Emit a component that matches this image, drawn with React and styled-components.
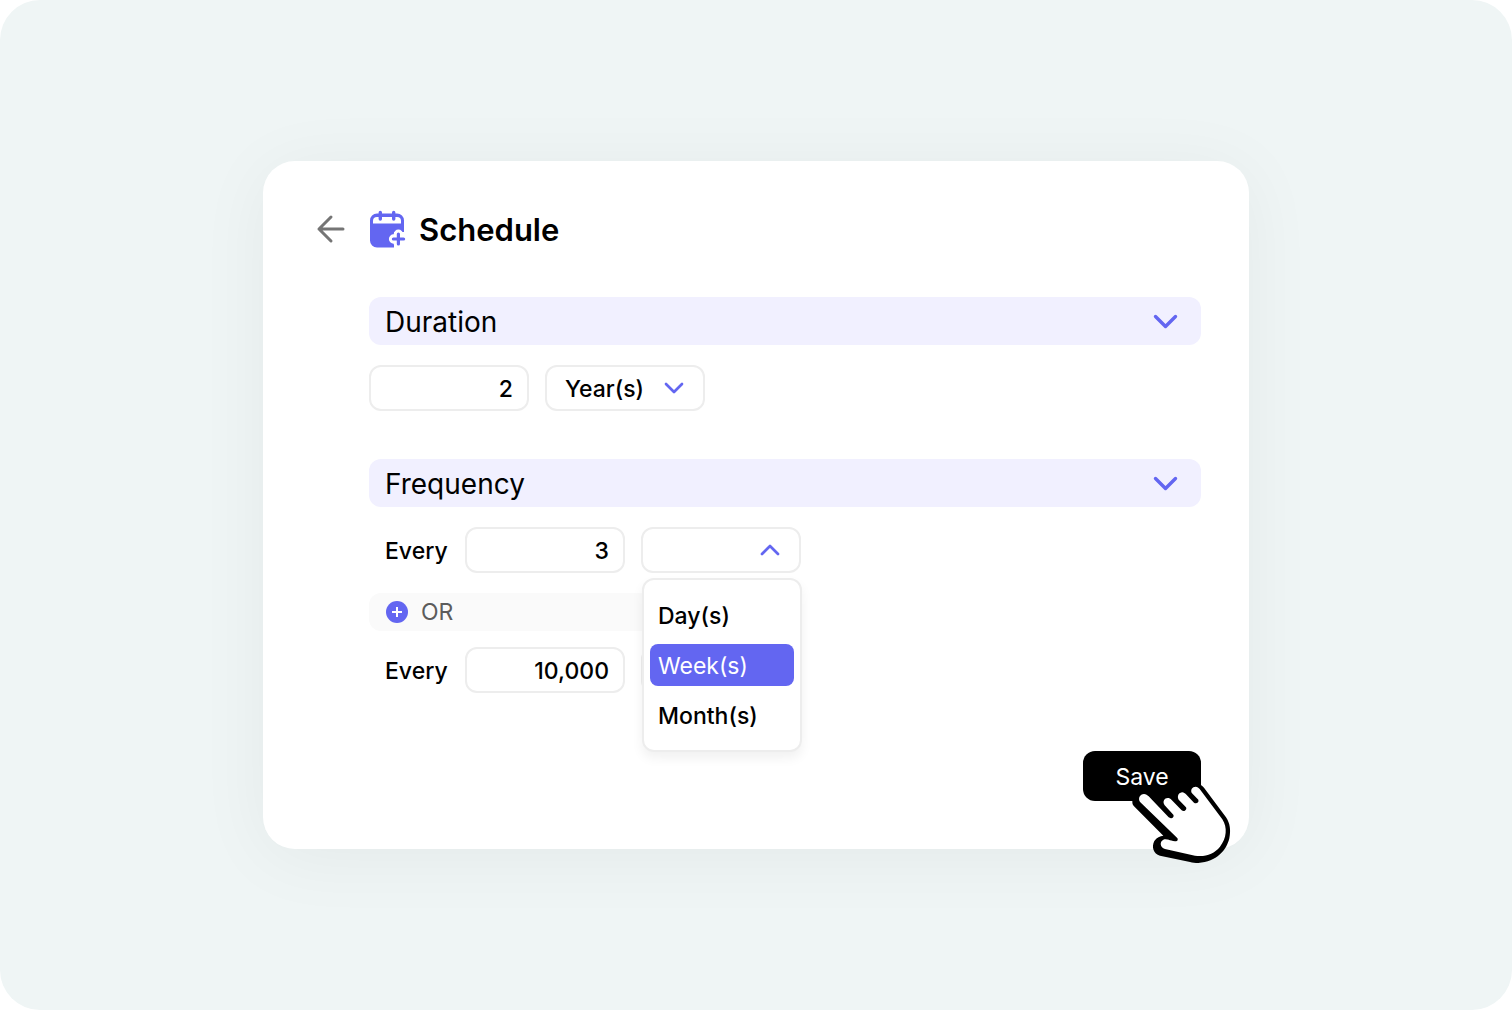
import React, { useState } from 'react';
import styled, { createGlobalStyle } from 'styled-components';

const color = {
  accent: '#6366f1',
  accentBg: '#f1f0ff',
  border: '#ededed',
  muted: '#fafafa',
  page: '#eff5f5',
};

const GlobalStyle = createGlobalStyle`
  *, *::before, *::after {
    box-sizing: border-box;
  }

  body {
    margin: 0;
    background-color: #fff;
    color: #000;
    font-family: Inter, 'Liberation Sans', sans-serif;
  }

  button, input, select {
    font: inherit;
    color: inherit;
  }
`;

const Page = styled.main`
  display: flex;
  align-items: center;
  justify-content: center;
  min-height: 100vh;
  padding: 48px;
  border-radius: 40px;
  background-color: ${color.page};
`;

const Card = styled.form`
  display: grid;
  grid-template-columns: 40px 1fr;
  column-gap: 18px;
  row-gap: 48px;
  width: 100%;
  max-width: 986px;
  padding: 48px;
  border-radius: 32px;
  background-color: #fff;
  box-shadow: 0 8px 72px rgba(0, 0, 0, 0.05);
`;

const BackButton = styled.button`
  display: flex;
  height: 40px;
  padding: 0;
  border: 0;
  background: none;
  color: #757575;
  cursor: pointer;
`;

const Header = styled.header`
  display: flex;
  align-items: center;
  gap: 12px;
`;

const Title = styled.h1`
  margin: 0;
  padding-top: 2px;
  font-size: 31px;
  font-weight: 600;
  line-height: 38px;
`;

const Content = styled.div`
  grid-column: 2;
  display: flex;
  flex-direction: column;
  gap: 48px;
`;

const Section = styled.section`
  display: flex;
  flex-direction: column;
  gap: 20px;
`;

const SectionToggle = styled.button`
  display: flex;
  align-items: center;
  justify-content: space-between;
  height: 48px;
  padding: 2px 23px 0 16px;
  border: 0;
  border-radius: 12px;
  background-color: ${color.accentBg};
  font-size: 28px;
  cursor: pointer;

  svg {
    margin-bottom: 2px;
    color: ${color.accent};
  }
`;

const Rules = styled.div`
  display: flex;
  flex-direction: column;
  gap: 16px;
`;

const Row = styled.div`
  display: flex;
  align-items: center;
  gap: 16px;
`;

const RowLabel = styled.label`
  width: 80px;
  padding-top: 2px;
  padding-left: 16px;
  font-size: 23px;
  font-weight: 500;
`;

const NumberInput = styled.input`
  width: 160px;
  height: 46px;
  padding: 2px 14px 0;
  border: 2px solid ${color.border};
  border-radius: 12px;
  background-color: #fff;
  font-size: 23px;
  font-weight: 500;
  text-align: right;
`;

const SelectBox = styled.div`
  position: relative;
  width: 160px;
  height: 46px;
`;

const UnitSelect = styled.select`
  width: 100%;
  height: 100%;
  padding: 2px 18px 0;
  border: 2px solid ${color.border};
  border-radius: 12px;
  background-color: #fff;
  font-size: 23px;
  font-weight: 500;
  appearance: none;
`;

const SelectIcon = styled.span`
  position: absolute;
  top: 17px;
  right: 21px;
  display: flex;
  color: ${color.accent};
  pointer-events: none;
`;

const Menu = styled.div`
  position: absolute;
  z-index: 1;
  top: 51px;
  left: 1px;
  display: flex;
  flex-direction: column;
  gap: 8px;
  width: 160px;
  padding: 14px 6px;
  border: 2px solid ${color.border};
  border-radius: 12px;
  background-color: #fff;
  box-shadow: 0 6px 12px rgba(0, 0, 0, 0.06);
`;

const MenuItem = styled.button`
  height: 42px;
  padding: 2px 8px 0;
  border: 0;
  border-radius: 8px;
  background-color: ${({ $active }) => ($active ? color.accent : 'transparent')};
  color: ${({ $active }) => ($active ? '#fff' : '#000')};
  font-size: 23px;
  font-weight: ${({ $active }) => ($active ? 400 : 500)};
  text-align: left;
  cursor: pointer;
`;

const OrBar = styled.button`
  display: flex;
  align-items: center;
  gap: 12px;
  width: 100%;
  max-width: 424px;
  height: 38px;
  margin-top: 4px;
  padding: 0 16px;
  border: 0;
  border-radius: 12px;
  background-color: ${color.muted};
  color: #5c5c5c;
  font-size: 23px;
  cursor: pointer;
`;

const Footer = styled.footer`
  grid-column: 2;
  display: flex;
  justify-content: flex-end;
  padding-top: 10px;
`;

const SaveBox = styled.div`
  position: relative;
`;

const SaveButton = styled.button`
  width: 118px;
  height: 50px;
  padding: 2px 0 0;
  border: 0;
  border-radius: 12px;
  background-color: #000;
  color: #fff;
  font-size: 23px;
  cursor: pointer;
`;

const Pointer = styled.svg`
  position: absolute;
  top: 31px;
  left: 47px;
  pointer-events: none;
`;

function ArrowIcon() {
  return (
    <svg width="40" height="40" viewBox="0 0 40 40" fill="none" stroke="currentColor" strokeWidth="3" strokeLinecap="round" strokeLinejoin="round">
      <path d="M32 20H8M20 8L8 20l12 12" />
    </svg>
  );
}

function CalendarIcon() {
  return (
    <svg width="38" height="38" viewBox="0 0 38 38" fill="none" stroke={color.accent} strokeLinecap="round">
      <path d="M8 3.500H28a7 7 0 0 1 7 7V22H25V37.500H8a7 7 0 0 1-7-7V10.500a7 7 0 0 1 7-7Z" fill={color.accent} stroke="none" />
      <path d="M4 13.500V11a4 4 0 0 1 4-4H28a4 4 0 0 1 4 4V13.500Z" fill="#fff" stroke="none" />
      <path d="M11.300 2.500V9M24.700 2.500V9" strokeWidth="3.400" />
      <path d="M29.400 24.200V33.800M24.600 29H34.200" stroke="#fff" strokeWidth="9.400" />
      <path d="M29.400 24V34M24.400 29H34.600" strokeWidth="3.200" />
    </svg>
  );
}

function Chevron({ width = 20, up = false }) {
  return (
    <svg width={width} height={width * 0.6} viewBox="0 0 20 12" fill="none" stroke="currentColor" strokeWidth="2.700" strokeLinecap="round" strokeLinejoin="round">
      <path d={up ? 'M2 10l8-8 8 8' : 'M2 2l8 8 8-8'} />
    </svg>
  );
}

function PlusIcon() {
  return (
    <svg width="24" height="24" viewBox="0 0 24 24">
      <circle cx="12" cy="12" r="11" fill={color.accent} />
      <path d="M12 7v10M7 12h10" stroke="#fff" strokeWidth="2" />
    </svg>
  );
}

function HandPointer() {
  return (
    <Pointer width="102" height="82" viewBox="210 126 306 246" aria-hidden="true">
      <path d="M217 186V178L240 155 300 170 350 150 395 134 412 131C421 132 428 138 432 143L498 232C510 250 513 270 508 295C500 330 470 366 415 369C405 369 398 368 390 366L300 347C280 342 274 320 283 303C290 292 300 288 310 287L225 202C218 195 217 191 217 186Z" />
      <path
        fill="#fff"
        d="M241 187C232 176 240 162 252 162C258 162 262 165 266 169L326 232C333 238 344 232 340 224L314 196C306 184 314 174 323 174C328 174 331 176 335 180L365 211C372 217 382 210 378 202L356 179C350 168 357 157 367 157C371 157 375 160 378 163L402 188C409 193 418 187 415 179L396 160C390 150 397 140 407 140C412 140 416 143 419 147L487 238C503 262 500 295 480 320C462 342 435 352 405 347L315 327C300 322 298 305 310 299C318 296 322 299 345 304C352 305 356 298 351 293Z"
      />
    </Pointer>
  );
}

const units = ['Day(s)', 'Week(s)', 'Month(s)'];

function UnitPicker({ label, options, open = false, value, onChange }) {
  return (
    <SelectBox>
      <UnitSelect aria-label={label} value={value} onChange={(e) => onChange(e.target.value)}>
        {options.map((option) => (
          <option key={option} value={option}>{option}</option>
        ))}
      </UnitSelect>
      <SelectIcon>
        <Chevron up={open} />
      </SelectIcon>
    </SelectBox>
  );
}

function App() {
  const [duration, setDuration] = useState('2');
  const [durationUnit, setDurationUnit] = useState('Year(s)');
  const [every, setEvery] = useState('3');
  const [everyUnit, setEveryUnit] = useState('');
  const [usage, setUsage] = useState('10,000');
  const [usageUnit, setUsageUnit] = useState('');
  const [active, setActive] = useState('Week(s)');
  const [open, setOpen] = useState(true);

  const pick = (unit) => {
    setEveryUnit(unit);
    setOpen(false);
  };

  return (
    <>
      <GlobalStyle />
      <Page>
        <Card onSubmit={(e) => e.preventDefault()}>
          <BackButton type="button" aria-label="Back">
            <ArrowIcon />
          </BackButton>
          <Header>
            <CalendarIcon />
            <Title>Schedule</Title>
          </Header>

          <Content>
            <Section>
              <SectionToggle type="button">
                Duration
                <Chevron width={25} />
              </SectionToggle>
              <Row>
                <NumberInput aria-label="Duration" value={duration} onChange={(e) => setDuration(e.target.value)} />
                <UnitPicker label="Duration unit" options={['Year(s)', ...units]} value={durationUnit} onChange={setDurationUnit} />
              </Row>
            </Section>

            <Section>
              <SectionToggle type="button">
                Frequency
                <Chevron width={25} />
              </SectionToggle>
              <Rules>
                <Row>
                  <RowLabel htmlFor="every">Every</RowLabel>
                  <NumberInput id="every" value={every} onChange={(e) => setEvery(e.target.value)} />
                  <SelectBox>
                    <UnitPicker label="Frequency unit" options={['', ...units]} open={open} value={everyUnit} onChange={setEveryUnit} />
                    {open && (
                      <Menu role="listbox" aria-label="Frequency unit">
                        {units.map((unit) => (
                          <MenuItem
                            key={unit}
                            type="button"
                            role="option"
                            aria-selected={unit === active}
                            $active={unit === active}
                            onMouseEnter={() => setActive(unit)}
                            onClick={() => pick(unit)}
                          >
                            {unit}
                          </MenuItem>
                        ))}
                      </Menu>
                    )}
                  </SelectBox>
                </Row>
                <OrBar type="button">
                  <PlusIcon />
                  OR
                </OrBar>
                <Row>
                  <RowLabel htmlFor="usage">Every</RowLabel>
                  <NumberInput id="usage" value={usage} onChange={(e) => setUsage(e.target.value)} />
                  <UnitPicker label="Usage unit" options={['', ...units]} value={usageUnit} onChange={setUsageUnit} />
                </Row>
              </Rules>
            </Section>
          </Content>

          <Footer>
            <SaveBox>
              <SaveButton type="submit">Save</SaveButton>
              <HandPointer />
            </SaveBox>
          </Footer>
        </Card>
      </Page>
    </>
  );
}

export default App;
